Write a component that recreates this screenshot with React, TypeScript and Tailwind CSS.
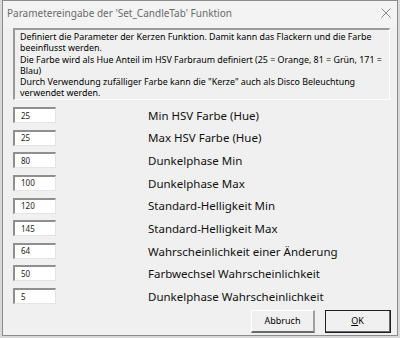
import React from "react";

const rows: [string, string][] = [
  ["25", "Min HSV Farbe (Hue)"],
  ["25", "Max HSV Farbe (Hue)"],
  ["80", "Dunkelphase Min"],
  ["100", "Dunkelphase Max"],
  ["120", "Standard-Helligkeit Min"],
  ["145", "Standard-Helligkeit Max"],
  ["64", "Wahrscheinlichkeit einer Änderung"],
  ["50", "Farbwechsel Wahrscheinlichkeit"],
  ["5", "Dunkelphase Wahrscheinlichkeit"],
];

export default function App() {
  return (
    <div
      className="w-[400px] h-[338px] bg-[#d8d8d8] overflow-hidden"
      style={{ fontFamily: '"Noto Sans", "Open Sans", sans-serif' }}
    >
      <div className="ml-[2px] w-[396px] h-[336px] border border-[#8c8c8c] bg-[#f0f0f0] flex flex-col">
        {/* title bar */}
        <div className="shrink-0 h-[27px] flex items-center justify-between pl-[4px] pr-[4px] bg-[#f3f3f3]">
          <span className="text-[10px] text-[#6a6a6a] leading-none mt-[-3px]">
            Parametereingabe der 'Set_CandleTab' Funktion
          </span>
          <svg width="12" height="12" viewBox="0 0 12 12" className="mt-[-3px] mr-[1px]">
            <path d="M1.5 1.5 L10.5 10.5 M10.5 1.5 L1.5 10.5" stroke="#8a8a8a" strokeWidth="1" />
          </svg>
        </div>
        {/* description */}
        <div className="shrink-0 ml-[10px] w-[377px] h-[72px] border-t-2 border-l-2 border-b border-r border-t-[#9a9a9a] border-l-[#9a9a9a] border-b-white border-r-white pl-[5px] pr-0 pt-[1px] text-[8.9px] leading-[11.3px] text-black overflow-hidden">
          <div>Definiert die Parameter der Kerzen Funktion. Damit kann das Flackern und die Farbe beeinflusst werden.</div>
          <div>Die Farbe wird als Hue Anteil im HSV Farbraum definiert (25 = Orange, 81 = Grün, 171 = Blau)</div>
          <div>Durch Verwendung zufälliger Farbe kann die "Kerze" auch als Disco Beleuchtung verwendet werden.</div>
        </div>
        {/* rows */}
        <div className="shrink-0 mt-[7px] ml-[10px] flex flex-col gap-[6.625px]">
          {rows.map(([v, l], i) => (
            <div key={i} className="flex items-center h-[16px]">
              <div className="w-[43px] h-[16px] bg-white border-t-2 border-l-2 border-b border-r border-t-[#8f8f8f] border-l-[#8f8f8f] border-b-[#e4e4e4] border-r-[#e4e4e4] flex items-center pl-[6px] text-[8px] text-[#222]">
                {v}
              </div>
              <div className="ml-[92px] mt-[1px] text-[11.5px] text-[#111] leading-none">{l}</div>
            </div>
          ))}
        </div>
        {/* buttons */}
        <div className="shrink-0 mt-[6px] flex justify-end pr-[6px] gap-[10px]">
          <div className="w-[64px] h-[23px] bg-[#f0f0f0] border-t border-l border-t-white border-l-white border-b-2 border-r-2 border-b-[#6a6a6a] border-r-[#a0a0a0] flex items-center justify-center text-[9px] text-black">
            Abbruch
          </div>
          <div className="w-[66px] h-[23px] bg-[#f0f0f0] border border-[#202020] flex items-center justify-center text-[9px] text-black">
            <div className="w-full h-full border-b border-r border-b-[#6a6a6a] border-r-[#6a6a6a] flex items-center justify-center">
              <span><span className="underline">O</span>K</span>
            </div>
          </div>
        </div>
      </div>
    </div>
  );
}
